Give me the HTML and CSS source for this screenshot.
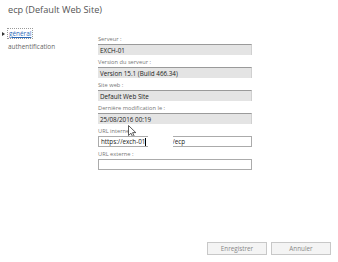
FILE: index.html
```html
<!DOCTYPE html>
<html>
<head>
<meta charset="utf-8">
<link rel="stylesheet" href="styles.css">
</head>
<body>
<div class="page">
  <h1 class="title">ecp (Default Web Site)</h1>
  <div class="main">
    <nav class="nav">
      <div class="nav-item"><span class="arrow"><svg width="3" height="4" viewBox="0 0 3 4"><path d="M0 0 L3 2 L0 4 Z" fill="#333"/></svg></span><a class="link">général</a></div>
      <div class="nav-item"><span class="arrow"></span><span>authentification</span></div>
    </nav>
    <form class="form">
      <label class="lbl">Serveur :</label>
      <div class="field ro">EXCH-01</div>
      <label class="lbl">Version du serveur :</label>
      <div class="field ro">Version 15.1 (Build 466.34)</div>
      <label class="lbl">Site web :</label>
      <div class="field ro">Default Web Site</div>
      <label class="lbl">Dernière modification le :</label>
      <div class="field ro">25/08/2016 00:19</div>
      <label class="lbl">URL interne<span class="cursor"><svg width="9" height="13" viewBox="0 0 9 13"><path d="M0.5 0.5 L0.5 10.5 L3 8.2 L4.8 12.2 L6.3 11.5 L4.6 7.6 L7.8 7.6 Z" fill="#fff" stroke="#333" stroke-width="0.8"/></svg></span></label>
      <div class="field rw url"><span class="caret">https://exch-01</span><span class="mask"></span><span class="tail">/ecp</span></div>
      <label class="lbl">URL externe :</label>
      <div class="field rw"></div>
    </form>
  </div>
  <div class="buttons">
    <button class="btn" type="button">Enregistrer</button>
    <button class="btn" type="button">Annuler</button>
  </div>
</div>
</body>
</html>
```
FILE: styles.css
```css
html, body {
  margin: 0;
  padding: 0;
  background: #fff;
}
body {
  font-family: "Open Sans", "Noto Sans", sans-serif;
  color: #333;
  width: 338px;
  height: 262px;
  overflow: hidden;
}
.page {
  padding: 4px 0 0 8px;
  height: 255px;
  display: flex;
  flex-direction: column;
  box-sizing: border-box;
}
.title {
  margin: 0;
  font-weight: normal;
  font-size: 9.2px;
  line-height: 12px;
  color: #555;
}
.main {
  display: flex;
  margin-top: 11px;
  margin-left: -6px;
}
.nav {
  width: 96px;
  font-size: 6.4px;
}
.nav-item {
  display: flex;
  align-items: center;
  height: 13px;
  color: #666;
}
.arrow {
  width: 6px;
  display: flex;
  align-items: center;
}
.link {
  color: #2a6ab8;
  text-decoration: underline;
  outline: 1px dotted #999;
  outline-offset: 0;
  line-height: 9px;
  padding: 0 1px;
}
.form {
  width: 154px;
  display: flex;
  flex-direction: column;
  padding-top: 7px;
}
.lbl {
  font-size: 5.7px;
  color: #777;
  line-height: 10px;
  height: 10px;
  margin-top: 2px;
  position: relative;
}
.lbl:first-child {
  margin-top: 0;
}
.field {
  height: 11px;
  box-sizing: border-box;
  font-size: 6.3px;
  padding-left: 2px;
  display: flex;
  align-items: center;
  color: #222;
  position: relative;
}
.ro {
  background: #e4e4e4;
  border-top: 1px solid #9a9a9a;
  border-right: 1px solid #d0d0d0;
}
.rw {
  background: #fff;
  border: 1px solid #ababab;
}
.caret {
  border-right: 1px solid #000;
  line-height: 8px;
}
.mask {
  position: absolute;
  left: 49px;
  top: -2px;
  width: 25px;
  height: 14px;
  background: #fff;
}
.tail {
  margin-left: 26px;
}
.cursor {
  position: absolute;
  left: 30px;
  top: -1px;
}
.buttons {
  margin-top: auto;
  display: flex;
  justify-content: flex-end;
  gap: 4px;
  padding-right: 7px;
}
.btn {
  width: 60px;
  height: 13px;
  border: 1px solid #c8c8c8;
  background: #f4f4f4;
  font-family: "Open Sans", sans-serif;
  font-size: 6.3px;
  color: #888;
  padding: 0;
}
```
